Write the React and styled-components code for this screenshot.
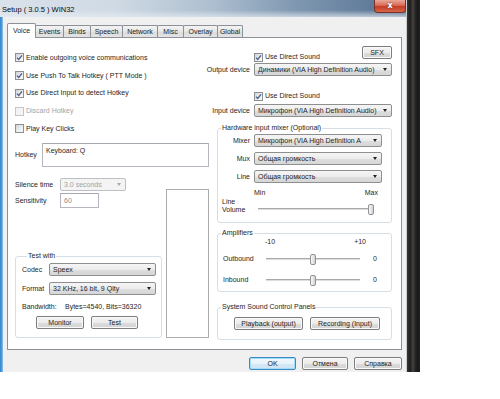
import React from 'react';
import styled, { createGlobalStyle } from 'styled-components';

const Global = createGlobalStyle`
  html, body { margin: 0; padding: 0; background: #fff; }
  body { font-family: "Liberation Sans", Arial, sans-serif; font-size: 7px; color: #1e1e1e; line-height: 8px; }
  * { box-sizing: border-box; }
`;

const Screen = styled.div`
  width: 500px;
  height: 399px;
  background: #fff;
  overflow: hidden;
`;

const Window = styled.div`
  width: 420px;
  height: 372px;
  display: grid;
  grid-template-columns: 3px 403px 14px;
  grid-template-rows: 17px 355px;
`;

const TitleBar = styled.div`
  grid-column: 1 / 3;
  grid-row: 1;
  display: flex;
  align-items: flex-start;
  padding-left: 2px;
  background:
    linear-gradient(to bottom, rgba(255,255,255,0) 60%, rgba(230,236,242,0.7) 100%),
    linear-gradient(to right, #d9e1ea 0%, #d0dae5 28%, #aebfd0 52%, #8199b2 72%, #637e9c 90%, #566f8c 100%);
`;

const TitleText = styled.span`
  font-size: 7.5px;
  line-height: 8px;
  margin-top: 6px;
  color: #0b0b0b;
`;

const CloseButton = styled.div`
  margin-left: auto;
  width: 32px;
  height: 13px;
  display: flex;
  align-items: center;
  justify-content: center;
  border: 1px solid #7a3024;
  border-top: none;
  border-radius: 0 0 4px 4px;
  background: linear-gradient(#e9a899 0%, #d86a55 45%, #c43d25 55%, #d5674b 100%);
  color: #fff;
  font-family: "DejaVu Sans", sans-serif;
  font-weight: bold;
  font-size: 8px;
  text-shadow: 0 0 2px #6b1b10;
`;

const LeftFrame = styled.div`
  grid-column: 1;
  grid-row: 2;
  background: linear-gradient(to right, #2f86d0, #5aa3dc 70%, #a9cbe6);
`;

const RightFrame = styled.div`
  grid-column: 3;
  grid-row: 1 / 3;
  background: linear-gradient(to right, #c7ccd2 0px, #c7ccd2 1px, #3a3734 1px, #1f1d1b 4px, #45423f 7px, #2a2826 9px, #191715 12px, #232120 14px);
`;

const Client = styled.div`
  grid-column: 2;
  grid-row: 2;
  background: #f0f0f0;
  padding: 6px 4px 0 4px;
  display: flex;
  flex-direction: column;
`;

const TabBar = styled.div`
  height: 14px;
  display: flex;
  align-items: flex-end;
`;

const Tab = styled.div`
  width: ${p => p.$w}px;
  height: ${p => (p.$active ? 15 : 12)}px;
  margin-right: -1px;
  margin-bottom: ${p => (p.$active ? -1 : 0)}px;
  border: 1px solid #8d9098;
  border-bottom: none;
  border-radius: 2px 2px 0 0;
  display: flex;
  align-items: center;
  justify-content: center;
  white-space: nowrap;
  background: ${p => (p.$active ? '#fff' : 'linear-gradient(#f4f4f4, #e6e6e6 50%, #dcdcdc 51%, #e3e3e3)')};
  position: ${p => (p.$active ? 'relative' : 'static')};
  z-index: ${p => (p.$active ? 2 : 'auto')};
`;

const Pane = styled.div`
  height: 313px;
  border: 1px solid #8d9098;
  background: #fff;
  display: grid;
  grid-template-columns: 195px 182px;
  padding: 0 9px 0 7px;
`;

const LeftColumn = styled.div`
  padding-top: 11px;
  display: flex;
  flex-direction: column;
`;

const RightColumn = styled.div`
  padding-top: 8px;
  display: flex;
  flex-direction: column;
`;

const CheckRow = styled.label`
  height: ${p => p.$h || 17.75}px;
  display: flex;
  align-items: center;
  gap: 2px;
  white-space: nowrap;
  color: ${p => (p.$disabled ? '#a3a3a3' : '#1e1e1e')};
  padding-left: ${p => p.$indent || 0}px;
  margin-top: ${p => p.$mt || 0}px;
`;

const Box = styled.span`
  width: 9px;
  height: 9px;
  flex: none;
  border: 1px solid ${p => (p.$disabled ? '#c6c6c6' : '#8e8f8f')};
  background: ${p => (p.$disabled ? '#f4f4f4' : 'linear-gradient(135deg, #cfd3d8 0%, #eceef0 55%, #fbfbfb 100%)')};
  display: flex;
  align-items: center;
  justify-content: center;
`;

function Check({ label, checked, disabled, h, indent, mt }) {
  return (
    <CheckRow $disabled={disabled} $h={h} $indent={indent} $mt={mt}>
      <Box $disabled={disabled}>
        {checked && (
          <svg width="7" height="7" viewBox="0 0 7 7">
            <path d="M1 3.6 L2.7 5.4 L6 1.3" fill="none" stroke="#4a5d8c" strokeWidth="1.3" />
          </svg>
        )}
      </Box>
      <span>{label}</span>
    </CheckRow>
  );
}

const FieldRow = styled.div`
  display: flex;
  align-items: center;
  gap: ${p => p.$gap || 0}px;
  margin-top: ${p => p.$mt || 0}px;
  padding-left: ${p => p.$indent || 0}px;
  white-space: nowrap;
`;

const Label = styled.span`
  width: ${p => p.$w}px;
  flex: none;
  display: flex;
  justify-content: ${p => (p.$right ? 'flex-end' : 'flex-start')};
  white-space: nowrap;
`;

const TextArea = styled.div`
  width: ${p => p.$w}px;
  height: ${p => p.$h}px;
  flex: none;
  border: 1px solid #b4b8be;
  border-top-color: #a5a9b0;
  background: #fff;
  padding: 3px 3px;
  color: ${p => (p.$muted ? '#8d8d8d' : '#1e1e1e')};
`;

const Combo = styled.div`
  width: ${p => p.$w}px;
  height: 13px;
  flex: none;
  display: flex;
  align-items: center;
  padding: 0 4px 0 3px;
  border: 1px solid ${p => (p.$disabled ? '#bcc0c4' : '#8e8f8f')};
  border-radius: 2px;
  background: ${p => (p.$disabled ? '#f4f4f4' : 'linear-gradient(#f5f5f5 0%, #ececec 50%, #dedede 51%, #d6d6d6 100%)')};
  color: ${p => (p.$disabled ? '#a3a3a3' : '#1e1e1e')};
  white-space: nowrap;
  overflow: hidden;
`;

const ComboText = styled.span`
  flex: 1;
  overflow: hidden;
`;

const Arrow = styled.span`
  flex: none;
  width: 0;
  height: 0;
  margin-left: 3px;
  border-left: 2.5px solid transparent;
  border-right: 2.5px solid transparent;
  border-top: 3px solid ${p => (p.$disabled ? '#a8a8a8' : '#222')};
`;

function Select({ w, value, disabled }) {
  return (
    <Combo $w={w} $disabled={disabled}>
      <ComboText>{value}</ComboText>
      <Arrow $disabled={disabled} />
    </Combo>
  );
}

const Button = styled.div`
  width: ${p => p.$w}px;
  height: 13px;
  flex: none;
  display: flex;
  align-items: center;
  justify-content: center;
  white-space: nowrap;
  border: 1px solid ${p => (p.$default ? '#3f88c0' : '#7d7d7d')};
  border-radius: 2px;
  background: ${p => (p.$default
    ? 'linear-gradient(#f3f9fd 0%, #e6f2fa 50%, #d5e8f5 51%, #cfe4f3 100%)'
    : 'linear-gradient(#f4f4f4 0%, #ececec 50%, #dddddd 51%, #d2d2d2 100%)')};
  box-shadow: inset 0 0 0 1px ${p => (p.$default ? '#9fdcf9' : '#fafafa')};
  margin-left: ${p => p.$ml || 0}px;
  margin-top: ${p => p.$mt || 0}px;
`;

const Group = styled.fieldset`
  margin: ${p => p.$mt || 0}px 0 0 ${p => p.$ml || 0}px;
  width: ${p => p.$w}px;
  min-width: 0;
  padding: 0 0 ${p => p.$pb || 0}px ${p => p.$pl || 0}px;
  border: 1px solid #d5dfe5;
  border-radius: 3px;
  display: flex;
  flex-direction: column;
`;

const Legend = styled.legend`
  margin-left: ${p => p.$ml || 3}px;
  padding: 0 1px;
  line-height: 10px;
  white-space: nowrap;
`;

const LowerSection = styled.div`
  margin-top: 11px;
  display: flex;
  align-items: flex-end;
  gap: 4px;
`;

const LeftStack = styled.div`
  width: 147px;
  display: flex;
  flex-direction: column;
`;

const MeterBox = styled.div`
  width: 43px;
  height: 149px;
  border: 1px solid #acacac;
  background: #fff;
`;

const ButtonRow = styled.div`
  display: flex;
  gap: 7px;
  margin-top: ${p => p.$mt || 0}px;
  padding-left: ${p => p.$indent || 0}px;
`;

const TopRow = styled.div`
  height: 16px;
  display: flex;
  align-items: flex-start;
  padding-left: 44px;
`;

const ScaleRow = styled.div`
  height: 8px;
  display: flex;
  justify-content: space-between;
  margin-top: ${p => p.$mt || 0}px;
  margin-left: ${p => p.$indent}px;
  width: ${p => p.$w}px;
`;

const StackedLabel = styled.div`
  width: 36px;
  padding-left: 4px;
  flex: none;
`;

const SliderRow = styled.div`
  display: flex;
  align-items: ${p => p.$align || 'center'};
  height: ${p => p.$h}px;
  margin-top: ${p => p.$mt || 0}px;
`;

const SliderWrap = styled.div`
  position: relative;
  width: ${p => p.$w}px;
  height: 11px;
  flex: none;
  padding: 0 4px;
  display: flex;
  align-items: center;
  margin-top: ${p => p.$mt || 0}px;
`;

const Track = styled.div`
  width: 100%;
  height: 3px;
  border-top: 1px solid #a9a9a9;
  border-bottom: 1px solid #fdfdfd;
  background: #dedede;
`;

const Thumb = styled.div`
  position: absolute;
  top: 0;
  width: 6px;
  height: 11px;
  margin-left: -3px;
  border: 1px solid #8f9398;
  border-radius: 2px;
  background: linear-gradient(to right, #fafafa, #e2e2e2 60%, #cfcfcf);
`;

function Slider({ w, value, mt }) {
  const inner = w - 8;
  return (
    <SliderWrap $w={w} $mt={mt}>
      <Track />
      <Thumb style={{ left: `${4 + inner * value}px` }} />
    </SliderWrap>
  );
}

const SliderLabel = styled.span`
  width: ${p => p.$w}px;
  padding-left: 5px;
  flex: none;
`;

const Value = styled.span`
  margin-left: 9px;
`;

const BottomBar = styled.div`
  margin-top: 7px;
  display: flex;
  justify-content: flex-end;
  gap: 6px;
`;

const tabs = [
  ['Voice', 29], ['Events', 29], ['Binds', 28], ['Speech', 33],
  ['Network', 36], ['Misc', 27], ['Overlay', 35], ['Global', 26],
];

export default function App() {
  return (
    <Screen>
      <Global />
      <Window>
        <TitleBar>
          <TitleText>Setup ( 3.0.5 ) WIN32</TitleText>
          <CloseButton>x</CloseButton>
        </TitleBar>
        <LeftFrame />
        <RightFrame />
        <Client>
          <TabBar>
            {tabs.map(([t, w], i) => (
              <Tab key={t} $w={w} $active={i === 0}>{t}</Tab>
            ))}
          </TabBar>
          <Pane>
            <LeftColumn>
              <Check label="Enable outgoing voice communications" checked />
              <Check label="Use Push To Talk Hotkey ( PTT Mode )" checked />
              <Check label="Use Direct Input to detect Hotkey" checked />
              <Check label="Discard Hotkey" disabled />
              <Check label="Play Key Clicks" />
              <FieldRow $mt={5.25}>
                <Label $w={27}>Hotkey</Label>
                <TextArea $w={167} $h={24}>Keyboard: Q</TextArea>
              </FieldRow>
              <LowerSection>
                <LeftStack>
                  <FieldRow>
                    <Label $w={45}>Silence time</Label>
                    <Select w={66} value="3.0 seconds" disabled />
                  </FieldRow>
                  <FieldRow $mt={2}>
                    <Label $w={45}>Sensitivity</Label>
                    <TextArea $w={39} $h={15} $muted>60</TextArea>
                  </FieldRow>
                  <Group $mt={43} $w={147} $pl={6} $pb={8}>
                    <Legend $ml={5}>Test with</Legend>
                    <FieldRow $mt={2}>
                      <Label $w={27}>Codec</Label>
                      <Select w={107} value="Speex" />
                    </FieldRow>
                    <FieldRow $mt={6}>
                      <Label $w={27}>Format</Label>
                      <Select w={107} value="32 KHz, 16 bit, 9 Qlty" />
                    </FieldRow>
                    <FieldRow $mt={8}>
                      <Label $w={43}>Bandwidth:</Label>
                      <span>Bytes=4540, Bits=36320</span>
                    </FieldRow>
                    <ButtonRow $mt={5} $indent={14}>
                      <Button $w={48}>Monitor</Button>
                      <Button $w={47}>Test</Button>
                    </ButtonRow>
                  </Group>
                </LeftStack>
                <MeterBox />
              </LowerSection>
            </LeftColumn>

            <RightColumn>
              <TopRow>
                <Check label="Use Direct Sound" checked h={10} mt={6} />
                <Button $w={30} $ml={0} style={{ marginLeft: 'auto' }}>SFX</Button>
              </TopRow>
              <FieldRow $mt={1} $gap={4}>
                <Label $w={40} $right>Output device</Label>
                <Select w={138} value="Динамики (VIA High Definition Audio)" />
              </FieldRow>
              <Check label="Use Direct Sound" checked h={10} indent={44} mt={15} />
              <FieldRow $mt={3} $gap={4}>
                <Label $w={40} $right>Input device</Label>
                <Select w={138} value="Микрофон (VIA High Definition Audio)" />
              </FieldRow>

              <Group $mt={6} $ml={7} $w={175} $pb={7}>
                <Legend>Hardware input mixer (Optional)</Legend>
                <FieldRow $mt={1} $gap={4}>
                  <Label $w={32} $right>Mixer</Label>
                  <Select w={128} value="Микрофон (VIA High Definition A" />
                </FieldRow>
                <FieldRow $mt={5} $gap={4}>
                  <Label $w={32} $right>Mux</Label>
                  <Select w={128} value="Общая громкость" />
                </FieldRow>
                <FieldRow $mt={5} $gap={4}>
                  <Label $w={32} $right>Line</Label>
                  <Select w={128} value="Общая громкость" />
                </FieldRow>
                <ScaleRow $mt={6} $indent={36} $w={124}>
                  <span>Min</span>
                  <span>Max</span>
                </ScaleRow>
                <SliderRow $mt={1} $h={17} $align="flex-start">
                  <StackedLabel>Line<br />Volume</StackedLabel>
                  <Slider w={124} value={0.97} mt={6} />
                </SliderRow>
              </Group>

              <Group $mt={5} $ml={7} $w={175} $pb={5}>
                <Legend>Amplifiers</Legend>
                <ScaleRow $indent={47} $w={101}>
                  <span>-10</span>
                  <span>+10</span>
                </ScaleRow>
                <SliderRow $mt={7} $h={12}>
                  <SliderLabel $w={44}>Outbound</SliderLabel>
                  <Slider w={102} value={0.5} />
                  <Value>0</Value>
                </SliderRow>
                <SliderRow $mt={9} $h={12}>
                  <SliderLabel $w={44}>Inbound</SliderLabel>
                  <Slider w={102} value={0.5} />
                  <Value>0</Value>
                </SliderRow>
              </Group>

              <Group $mt={10} $ml={7} $w={175} $pb={9}>
                <Legend>System Sound Control Panels</Legend>
                <ButtonRow $mt={5} $indent={16}>
                  <Button $w={69}>Playback (output)</Button>
                  <Button $w={70}>Recording (Input)</Button>
                </ButtonRow>
              </Group>
            </RightColumn>
          </Pane>
          <BottomBar>
            <Button $w={47} $default>OK</Button>
            <Button $w={46}>Отмена</Button>
            <Button $w={48}>Справка</Button>
          </BottomBar>
        </Client>
      </Window>
    </Screen>
  );
}
